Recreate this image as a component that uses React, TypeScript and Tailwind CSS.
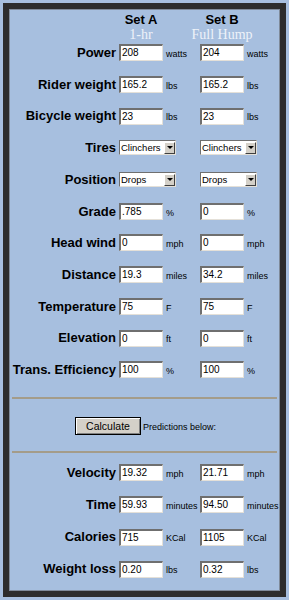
import React from 'react';

type Row = {
  label: string;
  a: string;
  b: string;
  unit: string;
  select?: boolean;
};

const inputRows: Row[] = [
  { label: 'Power', a: '208', b: '204', unit: 'watts' },
  { label: 'Rider weight', a: '165.2', b: '165.2', unit: 'lbs' },
  { label: 'Bicycle weight', a: '23', b: '23', unit: 'lbs' },
  { label: 'Tires', a: 'Clinchers', b: 'Clinchers', unit: '', select: true },
  { label: 'Position', a: 'Drops', b: 'Drops', unit: '', select: true },
  { label: 'Grade', a: '.785', b: '0', unit: '%' },
  { label: 'Head wind', a: '0', b: '0', unit: 'mph' },
  { label: 'Distance', a: '19.3', b: '34.2', unit: 'miles' },
  { label: 'Temperature', a: '75', b: '75', unit: 'F' },
  { label: 'Elevation', a: '0', b: '0', unit: 'ft' },
  { label: 'Trans. Efficiency', a: '100', b: '100', unit: '%' },
];

const resultRows: Row[] = [
  { label: 'Velocity', a: '19.32', b: '21.71', unit: 'mph' },
  { label: 'Time', a: '59.93', b: '94.50', unit: 'minutes' },
  { label: 'Calories', a: '715', b: '1105', unit: 'KCal' },
  { label: 'Weight loss', a: '0.20', b: '0.32', unit: 'lbs' },
];

const TextBox = ({ value }: { value: string }) => (
  <div className="w-[44px] h-[17px] bg-white border-t-[2px] border-l-[2px] border-b border-r border-t-[#6f6f6f] border-l-[#6f6f6f] border-b-[#e4e0d8] border-r-[#e4e0d8] text-[10px] leading-[13px] pl-[1px] text-black">
    {value}
  </div>
);

const SelectBox = ({ value }: { value: string }) => (
  <div className="w-[57px] h-[15px] bg-white border-t border-l border-b border-r border-t-[#6f6f6f] border-l-[#6f6f6f] border-b-[#e4e0d8] border-r-[#e4e0d8] flex items-center text-[9.5px] leading-[12px] text-black">
    <span className="flex-1 pl-[1px] whitespace-nowrap">{value}</span>
    <span className="w-[11px] h-[12px] shrink-0 bg-[#d4d0c8] border border-t-white border-l-white border-b-[#404040] border-r-[#404040] flex items-center justify-center">
      <span className="w-0 h-0 border-l-[3px] border-r-[3px] border-t-[3px] border-l-transparent border-r-transparent border-t-black" />
    </span>
  </div>
);

const Cell = ({ value, unit, select }: { value: string; unit: string; select?: boolean }) => (
  <div className="flex items-center gap-[3px]">
    {select ? <SelectBox value={value} /> : <TextBox value={value} />}
    {unit && <span className="text-[9px] mt-[4px] text-black whitespace-nowrap">{unit}</span>}
  </div>
);

const FormRow = ({ row }: { row: Row }) => (
  <div className="grid grid-cols-[110px_81px_1fr] items-center h-[31.7px]">
    <div className="text-right pr-[3px] text-[13px] font-bold text-black whitespace-nowrap">{row.label}</div>
    <Cell value={row.a} unit={row.unit} select={row.select} />
    <Cell value={row.b} unit={row.unit} select={row.select} />
  </div>
);

const serif = { fontFamily: '"Liberation Serif", "Times New Roman", serif' };

const App: React.FC = () => {
  return (
    <div
      className="w-[289px] h-[600px] bg-[#a7bfdf] p-[3px]"
      style={{ fontFamily: '"Liberation Sans", Arial, sans-serif' }}
    >
      <div className="h-[594px] border-[6px] border-[#2c2c2c] shadow-[inset_0_0_0_1px_#7f8a99] bg-[#a7bfdf] flex flex-col">
        <div className="grid grid-cols-[110px_81px_1fr] pt-[3px] h-[28px] overflow-visible">
          <div />
          <div className="w-[44px] flex flex-col items-center">
            <span className="text-[13px] font-bold leading-[15px] text-black whitespace-nowrap">Set A</span>
            <span className="text-[14px] leading-[15px] text-[#eef2f9] whitespace-nowrap" style={serif}>
              1-hr
            </span>
          </div>
          <div className="w-[44px] flex flex-col items-center">
            <span className="text-[13px] font-bold leading-[15px] text-black whitespace-nowrap">Set B</span>
            <span className="text-[14px] leading-[15px] text-[#eef2f9] whitespace-nowrap" style={serif}>
              Full Hump
            </span>
          </div>
        </div>
        {inputRows.map((row) => (
          <FormRow key={row.label} row={row} />
        ))}
        <div className="mt-[11px] mx-[3px] h-[2px] bg-[#a49c8a]" />
        <div className="h-[52px] flex items-center pl-[66px] gap-[2px] pt-[2px]">
          <button className="w-[66px] h-[18px] border border-black bg-[#d4d0c8] shadow-[inset_1px_1px_0_#ffffff,inset_-1px_-1px_0_#808080] text-[10.5px] leading-[14px] text-black">
            Calculate
          </button>
          <span className="text-[9px] mt-[4px] text-black">Predictions below:</span>
        </div>
        <div className="mx-[3px] h-[2px] bg-[#a49c8a]" />
        <div className="pt-[4px] [&>div]:h-[32.2px]">
          {resultRows.map((row) => (
            <FormRow key={row.label} row={row} />
          ))}
        </div>
      </div>
    </div>
  );
};

export default App;
